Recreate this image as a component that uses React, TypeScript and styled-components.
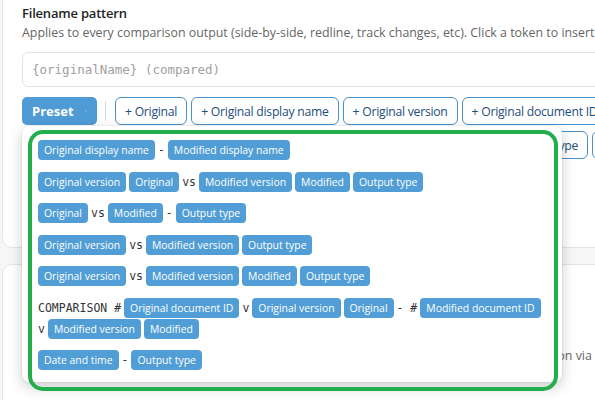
import React from 'react';
import styled, { createGlobalStyle } from 'styled-components';

const GlobalStyle = createGlobalStyle`
  html, body {
    margin: 0;
    padding: 0;
  }
  body {
    background: #f6f6f7;
    font-family: "Open Sans", "Noto Sans", sans-serif;
    color: #222;
    overflow: hidden;
  }
`;

const Page = styled.div`
  display: flex;
  flex-direction: column;
  gap: 16px;
  margin: -12px 0 0 2px;
  width: 900px;
`;

const Card = styled.section<{ $bottom: number }>`
  background: #fff;
  border: 1px solid #e4e4e6;
  border-radius: 10px;
  padding: 14px 20px ${(p) => p.$bottom}px 19px;
`;

const Title = styled.h3`
  margin: 0;
  font-size: 13px;
  font-weight: 600;
  line-height: 20px;
  letter-spacing: -0.2px;
  color: #1f1f1f;
`;

const Hint = styled.p<{ $top?: number }>`
  margin: ${(p) => p.$top ?? 1}px 0 0;
  font-size: 12.4px;
  line-height: 18px;
  color: #666;
  white-space: nowrap;
`;

const PatternInput = styled.input`
  display: block;
  box-sizing: border-box;
  margin-top: 10px;
  width: 860px;
  height: 35px;
  padding: 0 9px;
  border: 1px solid #e1e1e3;
  border-radius: 6px;
  font-family: "DejaVu Sans Mono", "Liberation Mono", monospace;
  font-size: 12.5px;
  color: #333;
  outline: none;
  &::placeholder {
    color: #a0a0a0;
  }
`;

const TokenBar = styled.div`
  display: flex;
  flex-wrap: wrap;
  align-items: center;
  gap: 6px 4px;
  margin-top: 10px;
  width: 760px;
`;

const PresetWrap = styled.div`
  position: relative;
`;

const PresetButton = styled.button`
  box-sizing: border-box;
  display: flex;
  align-items: center;
  gap: 11px;
  width: 75px;
  height: 28px;
  padding: 0 10px;
  background: #4f9bd5;
  color: #fff;
  border: none;
  border-radius: 5px;
  font-family: inherit;
  font-size: 13px;
  font-weight: 700;
`;

const Divider = styled.span`
  width: 1px;
  height: 20px;
  margin: 0 5px 0 4px;
  background: #dcdcde;
`;

const TokenButton = styled.button`
  box-sizing: border-box;
  height: 28px;
  padding: 0 9px;
  background: #fff;
  color: #1d4d7a;
  border: 1px solid #4b91cb;
  border-radius: 6px;
  font-family: inherit;
  font-size: 12.2px;
  font-weight: 500;
  letter-spacing: -0.25px;
  white-space: nowrap;
`;

const Menu = styled.div`
  position: absolute;
  top: calc(100% + 1px);
  left: 0;
  z-index: 10;
  box-sizing: border-box;
  width: 540px;
  padding: 14px 16px 12px;
  background: #fff;
  border-radius: 8px;
  box-shadow: 0 5px 14px rgba(0, 0, 0, 0.2), 0 0 0 1px rgba(0, 0, 0, 0.03);
`;

// green outline around the preset list
const Highlight = styled.div`
  position: absolute;
  top: 4px;
  left: 6px;
  right: 4px;
  bottom: -9px;
  border: 4px solid #22ae4c;
  border-radius: 15px;
  pointer-events: none;
`;

const PresetList = styled.div`
  display: flex;
  flex-direction: column;
  gap: 11.5px;
`;

const PresetRow = styled.div`
  display: flex;
  flex-wrap: wrap;
  align-items: center;
  gap: 1px 3px;
  cursor: pointer;
`;

const Chip = styled.span`
  display: inline-flex;
  align-items: center;
  height: 20px;
  padding: 0 6px;
  background: #519ed6;
  color: #fff;
  border-radius: 4px;
  font-size: 10.4px;
  font-weight: 500;
  white-space: nowrap;
`;

const Literal = styled.span`
  font-family: "DejaVu Sans Mono", "Liberation Mono", monospace;
  font-size: 11.5px;
  color: #333;
  white-space: pre;
`;

type Part = { chip?: string; text?: string };

const presets: Part[][] = [
  [{ chip: 'Original display name' }, { text: '-' }, { chip: 'Modified display name' }],
  [
    { chip: 'Original version' },
    { chip: 'Original' },
    { text: 'vs' },
    { chip: 'Modified version' },
    { chip: 'Modified' },
    { chip: 'Output type' },
  ],
  [{ chip: 'Original' }, { text: 'vs' }, { chip: 'Modified' }, { text: '-' }, { chip: 'Output type' }],
  [{ chip: 'Original version' }, { text: 'vs' }, { chip: 'Modified version' }, { chip: 'Output type' }],
  [
    { chip: 'Original version' },
    { text: 'vs' },
    { chip: 'Modified version' },
    { chip: 'Modified' },
    { chip: 'Output type' },
  ],
  [
    { text: 'COMPARISON #' },
    { chip: 'Original document ID' },
    { text: 'v' },
    { chip: 'Original version' },
    { chip: 'Original' },
    { text: '- #' },
    { chip: 'Modified document ID' },
    { text: 'v' },
    { chip: 'Modified version' },
    { chip: 'Modified' },
  ],
  [{ chip: 'Date and time' }, { text: '-' }, { chip: 'Output type' }],
];

const tokens = [
  'Original',
  'Original display name',
  'Original version',
  'Original document ID',
  'Modified',
  'Modified display name',
  'Modified version',
  'Date and time',
  'Counter',
  'Output type',
  'Modified document ID',
];

function Chevron() {
  return (
    <svg width="10" height="10" viewBox="0 0 10 10" fill="none">
      <path d="M1.5 3.5 5 6.8 8.5 3.5" stroke="#fff" strokeWidth="1.5" strokeLinecap="round" strokeLinejoin="round" />
    </svg>
  );
}

export default function App() {
  return (
    <>
      <GlobalStyle />
      <Page>
        <Card $bottom={88}>
          <Title>Filename pattern</Title>
          <Hint>
            Applies to every comparison output (side-by-side, redline, track changes, etc). Click a token to insert it at
            the cursor.
          </Hint>
          <PatternInput placeholder="{originalName} (compared)" />
          <TokenBar>
            <PresetWrap>
              <PresetButton>
                Preset
                <Chevron />
              </PresetButton>
              <Menu>
                <PresetList>
                  {presets.map((row, i) => (
                    <PresetRow key={i}>
                      {row.map((part, j) =>
                        part.chip ? <Chip key={j}>{part.chip}</Chip> : <Literal key={j}>{part.text}</Literal>
                      )}
                    </PresetRow>
                  ))}
                </PresetList>
                <Highlight />
              </Menu>
            </PresetWrap>
            <Divider />
            {tokens.map((t) => (
              <TokenButton key={t}>+ {t}</TokenButton>
            ))}
          </TokenBar>
        </Card>
        <Card $bottom={60}>
          <Title>Delivery</Title>
          <Hint>Where finished files are sent.</Hint>
          <Hint $top={29}>
            Each finished comparison can also be delivered to a shared team folder or sent as a notification via email.
          </Hint>
        </Card>
      </Page>
    </>
  );
}
